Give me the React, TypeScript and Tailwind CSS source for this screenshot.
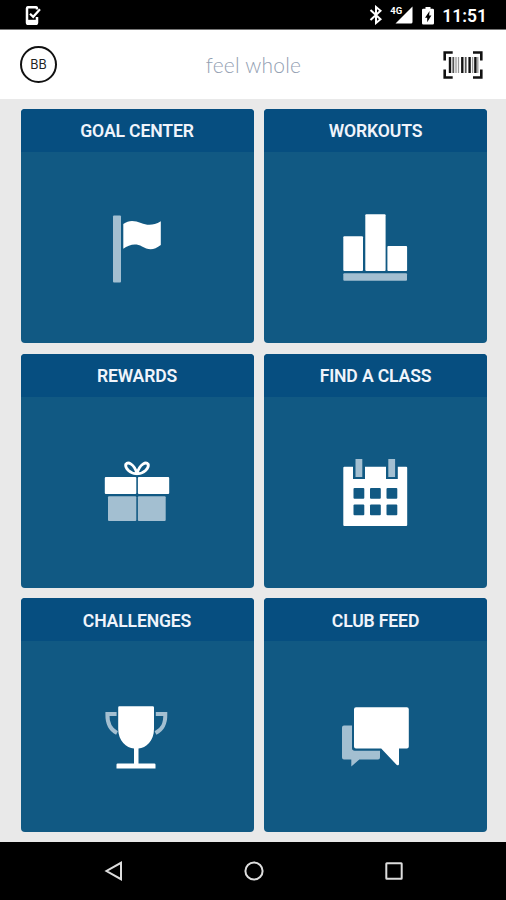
import type { ReactNode } from 'react';

interface Tile {
  title: string;
  icon: ReactNode;
}

const FlagIcon = () => (
  <svg viewBox="0 0 80 80" className="size-20">
    <rect x="16" y="7.6" width="8" height="67" rx="1" fill="#a3bfd1" />
    <path d="M26.3 16 C32 11.5 38 12.5 44 15 S56 18 63.8 13.3 V37 C57 42.5 51 42 45 38.5 S32 36.5 26.3 40.8Z" fill="#fff" />
  </svg>
);

const BarsIcon = () => (
  <svg viewBox="0 0 80 80" className="size-20" fill="#fff">
    <rect x="7.3" y="28.3" width="19.7" height="34.7" rx="1" />
    <rect x="29.3" y="6.3" width="20.3" height="56.7" rx="1" />
    <rect x="51.4" y="38" width="19.7" height="25" rx="1" />
    <rect x="7.3" y="65.3" width="63.7" height="7.4" rx="1" fill="#a3bfd1" />
  </svg>
);

const GiftIcon = () => (
  <svg viewBox="0 0 80 80" className="size-20" fill="#fff">
    <path
      d="M40 21.5 C33 22 28 16 28.7 12.3 C31 9.5 37 11.5 40 21.5 C43 11.5 49 9.5 51.3 12.3 C52 16 47 22 40 21.5Z"
      fill="none"
      stroke="#fff"
      strokeWidth="2.8"
      strokeLinejoin="round"
    />
    <path d="M35 21.2 H45 L40 23.3Z" />
    <rect x="7.8" y="25" width="31.5" height="17" rx="1" />
    <rect x="40.9" y="25" width="31.3" height="17" rx="1" />
    <rect x="11" y="44.3" width="28.3" height="24.7" rx="1" fill="#a3bfd1" />
    <rect x="40.9" y="44.3" width="27.8" height="24.7" rx="1" fill="#a3bfd1" />
  </svg>
);

const CalendarIcon = () => (
  <svg viewBox="0 0 80 80" className="size-20">
    <g transform="translate(-.5)">
      <path d="M8.8 14.7 H17.5 V27 H29.5 V14.7 H50.5 V27 H62.3 V14.7 H70.7 Q71.7 14.7 71.7 15.7 V73 Q71.7 74 70.7 74 H8.8 Q7.8 74 7.8 73 V15.7 Q7.8 14.7 8.8 14.7Z" fill="#fff" />
      <g fill="#a3bfd1">
        <rect x="20" y="7" width="6.8" height="18" />
        <rect x="52.8" y="7" width="6.8" height="18" />
      </g>
      <g fill="#115983">
        {[36, 52.4].map((y) => [18, 34.5, 51].map((x) => (
          <rect key={`${x}-${y}`} x={x} y={y} width="10.8" height="10.8" rx="1" />
        )))}
      </g>
    </g>
  </svg>
);

const TrophyIcon = () => (
  <svg viewBox="0 0 80 80" className="size-20">
    <g fill="none" stroke="#a3bfd1" strokeWidth="4">
      <path d="M19.6 17 H10.4 C10.2 27 13 32.5 20 36" />
      <path d="M58.8 17 H68.3 C68.5 27 65.7 32.5 58.5 36" />
    </g>
    <path d="M22.3 9.3 H55.7 Q57 9.3 57 10.6 V32 C57 44 49 51 41.5 51.5 V66.5 H57.3 Q58.5 66.5 58.5 67.5 V71.5 H19.5 V67.5 Q19.5 66.5 20.7 66.5 H37 V51.5 C29.5 51 21.2 44 21.2 32 V10.6 Q21.2 9.3 22.3 9.3Z" fill="#fff" />
  </svg>
);

const ChatIcon = () => (
  <svg viewBox="0 0 80 80" className="size-20">
    <g transform="translate(-.5 .5)">
      <path d="M8.5 28 H16.5 V50.5 Q16.5 53.2 19.2 53.2 H44.5 V60 Q44.5 62 42.5 62 H23.8 L15.8 69 V62 H8.5 Q6.5 62 6.5 60 V30 Q6.5 28 8.5 28Z" fill="#a3bfd1" />
      <path d="M20.5 9.8 H71.3 Q73.3 9.8 73.3 11.8 V49 Q73.3 51 71.3 51 H63.5 V66.5 Q63.3 68.8 61 67.2 L45.7 51 H20.5 Q18.5 51 18.5 49 V11.8 Q18.5 9.8 20.5 9.8Z" fill="#fff" />
    </g>
  </svg>
);

const tiles: Tile[] = [
  { title: 'GOAL CENTER', icon: <FlagIcon /> },
  { title: 'WORKOUTS', icon: <BarsIcon /> },
  { title: 'REWARDS', icon: <GiftIcon /> },
  { title: 'FIND A CLASS', icon: <CalendarIcon /> },
  { title: 'CHALLENGES', icon: <TrophyIcon /> },
  { title: 'CLUB FEED', icon: <ChatIcon /> },
];

function StatusBar() {
  return (
    <div className="flex h-[30px] shrink-0 items-center justify-between border-b border-[#777] bg-black pr-[19px] pl-[25px] text-white">
      <svg viewBox="0 0 17 20" className="mt-0.5 h-5 w-[17px]" fill="none" stroke="#fff">
        <path d="M12 3.5 V2.5 Q12 1.2 10.7 1.2 H3.3 Q2 1.2 2 2.5 V16.5 Q2 17.8 3.3 17.8 H10.7 Q12 17.8 12 16.5 V11" strokeWidth="2.5" />
        <path d="M2 15.8 H12" strokeWidth="4" />
        <path d="M5 7.7 L8.2 10.8 L15 3.3" strokeWidth="2.2" />
      </svg>
      <div className="flex items-center">
        <svg viewBox="0 0 14 20" className="mt-px mr-[7px] h-5 w-3.5" fill="none" stroke="#fff" strokeWidth="2">
          <path d="M1.5 5 L11.5 14.3 L7 18 V2 L11.5 5.7 L1.5 15" />
        </svg>
        <span className="-mt-2 -mr-[7px] font-[Roboto,sans-serif] text-[9.5px] leading-none font-bold">4G</span>
        <svg viewBox="0 0 18 18" className="mt-px mr-[9px] h-[18px] w-[18px]" fill="#fff">
          <path d="M17.5 .5 V16 Q17.5 17.5 16 17.5 H.5Z" />
        </svg>
        <svg viewBox="0 0 12 18" className="mt-0.5 mr-2 h-[18px] w-3">
          <path d="M3.5 0 H8.5 V1.7 H10.7 Q12 1.7 12 3 V16.3 Q12 17.5 10.7 17.5 H1.3 Q0 17.5 0 16.3 V3 Q0 1.7 1.3 1.7 H3.5Z" fill="#fff" />
          <path d="M7.6 4 L3 10.7 H5.2 V15.3 L9.4 8.6 H7.1Z" fill="#000" />
        </svg>
        <span className="mt-1 font-[Roboto,sans-serif] text-[17.5px] leading-none font-semibold">11:51</span>
      </div>
    </div>
  );
}

function Header() {
  return (
    <header className="grid h-[69px] shrink-0 grid-cols-[1fr_auto_1fr] items-center bg-white pr-[23px] pl-5">
      <div className="flex size-[37px] items-center justify-center rounded-full border-2 border-[#111] pt-0.5 font-[Inter,sans-serif] text-[12.5px] text-[#222]">
        BB
      </div>
      <h1 className="ml-1 font-[Lato,sans-serif] text-[21px] leading-none font-light tracking-[0.2px] text-[#93a0b2]">feel whole</h1>
      <svg viewBox="0 0 40 28" className="h-7 w-10 justify-self-end" fill="none" stroke="#111">
        <path d="M1.7 9.5 V1.5 H9.7 M30 1.5 H38.3 V9.5 M38.3 18.5 V26.5 H30 M9.7 26.5 H1.7 V18.5" strokeWidth="2.6" />
        <path d="M7 6 V22 M19.3 6 V22 M26.6 6 V22 M32.4 6 V22" strokeWidth="2.4" />
        <path d="M10.3 6 V22 M22.7 6 V22" strokeWidth="1.8" stroke="#555" />
        <path d="M13 6 V22 M15.5 6 V22 M29.6 6 V22 M34.8 6 V22" strokeWidth="1.3" stroke="#999" />
      </svg>
    </header>
  );
}

export default function App() {
  return (
    <div className="flex h-[900px] w-[506px] flex-col bg-[#e9e9e9]">
      <StatusBar />
      <Header />
      <main className="grid flex-1 grid-cols-[233px_223px] grid-rows-[repeat(3,234px)] gap-x-[10.5px] gap-y-[10.7px] pt-[10px] pl-[20.5px]">
        {tiles.map((tile) => (
          <section key={tile.title} className="flex flex-col overflow-hidden rounded bg-[#115983]">
            <h2 className="flex h-[43px] shrink-0 items-center justify-center bg-[#064e80] pt-0.5 font-[Roboto,sans-serif] text-[17.6px] font-semibold tracking-[-0.15px] text-[#f0f4fb]">
              {tile.title}
            </h2>
            <div className="flex flex-1 items-center justify-center">{tile.icon}</div>
          </section>
        ))}
      </main>
      <nav className="flex h-[58px] shrink-0 items-center justify-center gap-[120px] bg-black pl-px">
        <svg viewBox="0 0 20 20" className="size-5" fill="none" stroke="#ddd" strokeWidth="2">
          <path d="M17 1.8 V18.2 L2.5 10Z" />
        </svg>
        <svg viewBox="0 0 20 20" className="size-5" fill="none" stroke="#ddd" strokeWidth="2">
          <circle cx="10" cy="10" r="8.6" />
        </svg>
        <svg viewBox="0 0 20 20" className="size-5" fill="none" stroke="#ddd" strokeWidth="2">
          <rect x="2.3" y="2.3" width="15.4" height="15.4" rx="0.5" />
        </svg>
      </nav>
    </div>
  );
}
